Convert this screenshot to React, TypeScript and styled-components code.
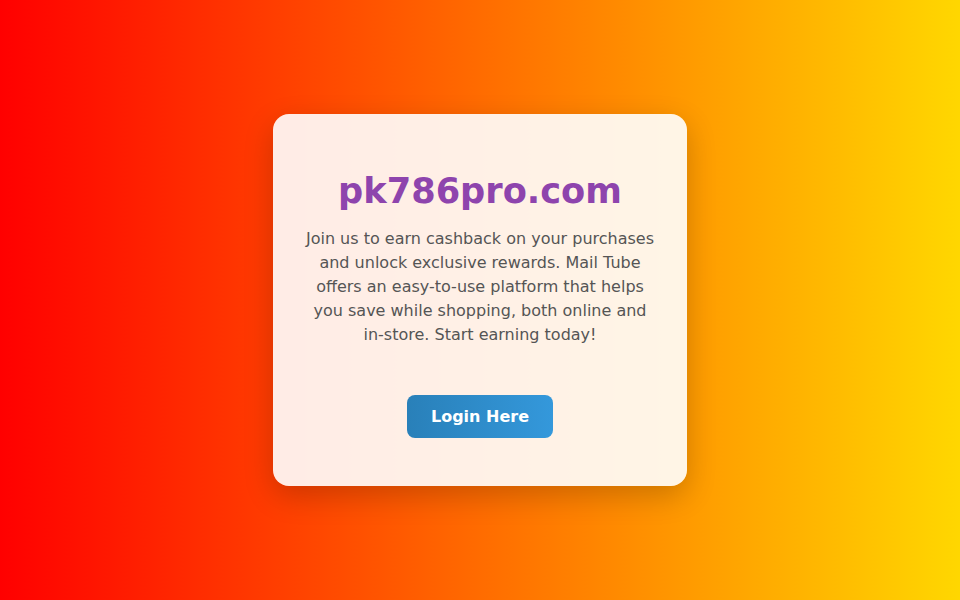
import styled, { createGlobalStyle } from "styled-components";

const GlobalStyle = createGlobalStyle`
  html, body, #root {
    margin: 0;
    padding: 0;
    height: 100%;
  }
  body {
    font-family: "DejaVu Sans", Verdana, sans-serif;
  }
`;

const Page = styled.div`
  height: 100vh;
  display: flex;
  align-items: center;
  justify-content: center;
  background: linear-gradient(to right, #ff0000, #ffd700);
`;

const Card = styled.div`
  width: 350px;
  padding: 40px 32px 48px;
  background: rgba(255, 255, 255, 0.9);
  border-radius: 16px;
  box-shadow: 0 10px 30px rgba(0, 0, 0, 0.2);
  text-align: center;
`;

const Title = styled.h1`
  margin: 16px 0 16px;
  font-size: 2.2rem;
  font-weight: bold;
  color: #8e44ad;
`;

const Text = styled.p`
  margin: 0 0 48px;
  font-size: 16px;
  line-height: 24px;
  color: #555;
`;

const LoginButton = styled.a`
  display: inline-block;
  padding: 12px 24px;
  font-size: 16px;
  font-weight: bold;
  line-height: 19px;
  color: #fff;
  text-decoration: none;
  border-radius: 8px;
  background: linear-gradient(to right, #2980b9, #3498db);
  cursor: pointer;
`;

export default function App() {
  return (
    <>
      <GlobalStyle />
      <Page>
        <Card>
          <Title>pk786pro.com</Title>
          <Text>
            Join us to earn cashback on your purchases and unlock exclusive
            rewards. Mail Tube offers an easy-to-use platform that helps you
            save while shopping, both online and in-store. Start earning today!
          </Text>
          <LoginButton href="#">Login Here</LoginButton>
        </Card>
      </Page>
    </>
  );
}
